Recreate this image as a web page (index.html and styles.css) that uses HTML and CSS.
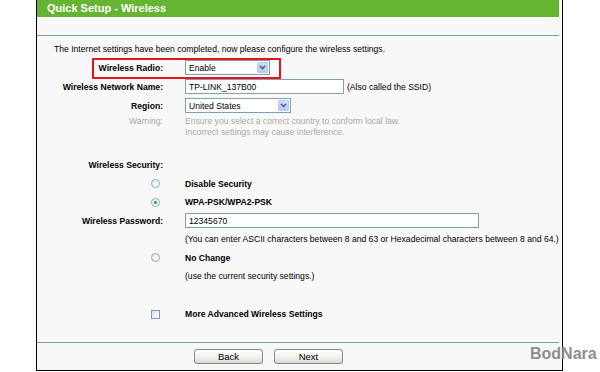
FILE: index.html
```html
<!DOCTYPE html>
<html lang="en">
<head>
    <meta charset="UTF-8">
    <title>Quick Setup - Wireless</title>
    <link rel="stylesheet" href="styles.css">
</head>
<body>
<div class="page">
    <div class="frame">
        <div class="title">Quick Setup - Wireless</div>
        <div class="title-gap"></div>
        <p class="intro">The Internet settings have been completed, now please configure the wireless settings.</p>

        <form class="form">
            <div class="row marked">
                <label class="lbl">Wireless Radio:</label>
                <div class="field">
                    <div class="select w-radio">
                        <select><option>Enable</option><option>Disable</option></select>
                        <span class="arrow"><svg width="7" height="5" viewBox="0 0 7 5"><path d="M0.8 0.8 L3.5 3.6 L6.2 0.8" fill="none" stroke="#4a5f8a" stroke-width="1.5"/></svg></span>
                    </div>
                </div>
                <span class="highlight"></span>
            </div>
            <div class="row">
                <label class="lbl">Wireless Network Name:</label>
                <div class="field">
                    <input type="text" class="text w-ssid" value="TP-LINK_137B00">
                    <span class="note">(Also called the SSID)</span>
                </div>
            </div>
            <div class="row">
                <label class="lbl">Region:</label>
                <div class="field">
                    <div class="select w-region">
                        <select><option>United States</option></select>
                        <span class="arrow"><svg width="7" height="5" viewBox="0 0 7 5"><path d="M0.8 0.8 L3.5 3.6 L6.2 0.8" fill="none" stroke="#4a5f8a" stroke-width="1.5"/></svg></span>
                    </div>
                </div>
            </div>
            <div class="row warn">
                <span class="lbl">Warning:</span>
                <div class="field">Ensure you select a correct country to conform local law.<br>Incorrect settings may cause interference.</div>
            </div>

            <div class="security">
                <div class="row">
                    <span class="lbl">Wireless Security:</span>
                    <div class="field"></div>
                </div>
                <div class="row">
                    <span class="pick"><input type="radio" name="sec" class="radio"></span>
                    <div class="field strong">Disable Security</div>
                </div>
                <div class="row">
                    <span class="pick"><input type="radio" name="sec" class="radio" checked></span>
                    <div class="field strong">WPA-PSK/WPA2-PSK</div>
                </div>
                <div class="row">
                    <label class="lbl">Wireless Password:</label>
                    <div class="field"><input type="text" class="text w-pass" value="12345670"></div>
                </div>
                <div class="row">
                    <span></span>
                    <div class="field hint">(You can enter ASCII characters between 8 and 63 or Hexadecimal characters between 8 and 64.)</div>
                </div>
                <div class="row">
                    <span class="pick"><input type="radio" name="sec" class="radio"></span>
                    <div class="field strong">No Change</div>
                </div>
                <div class="row">
                    <span></span>
                    <div class="field">(use the current security settings.)</div>
                </div>
            </div>

            <div class="row more">
                <span class="pick"><input type="checkbox" class="check"></span>
                <div class="field strong">More Advanced Wireless Settings</div>
            </div>
        </form>

        <div class="footer">
            <button type="button" class="btn">Back</button>
            <button type="button" class="btn">Next</button>
        </div>
    </div>
    <div class="watermark">BodNara</div>
</div>
</body>
</html>
```

FILE: styles.css
```css
body {
    margin: 0;
    background-color: #fff;
    font-family: "Liberation Sans", Arial, sans-serif;
    font-size: 8.6px;
    color: #000;
}
.page {
    position: relative;
    width: 600px;
    height: 372px;
    overflow: hidden;
}
.frame {
    margin-left: 36px;
    width: 522px;
    height: 370px;
    padding-right: 3px;
    border-left: 1px solid #000;
    border-right: 1px solid #000;
    border-bottom: 1px solid #000;
    background-color: #f8f8f8;
}
.title {
    height: 17px;
    line-height: 17px;
    padding-left: 10px;
    background-color: #66b532;
    color: #fff;
    font-size: 11px;
    font-weight: bold;
}
.title-gap {
    height: 18px;
    border-bottom: 1px solid #6fa98a;
}
.intro {
    margin: 8px 0 0 17px;
    line-height: 11px;
}
.form {
    margin: 3px 0 0 0;
}
.row {
    display: grid;
    grid-template-columns: 126px 1fr;
    column-gap: 22px;
    align-items: center;
    height: 19px;
}
.marked {
    position: relative;
}
.highlight {
    position: absolute;
    left: 55px;
    top: 0;
    width: 185px;
    height: 17px;
    border: 2px solid #e8141b;
}
.lbl {
    text-align: right;
    font-weight: bold;
}
.field {
    display: flex;
    align-items: center;
    gap: 3px;
}
.strong {
    font-weight: bold;
}
.note {
    white-space: nowrap;
}
.warn {
    height: auto;
    align-items: start;
    padding-top: 1px;
    line-height: 11px;
    color: #a8a8a8;
}
.warn .lbl {
    font-weight: normal;
}
.warn .field {
    display: block;
}
.security {
    margin-top: 18px;
}
.security .row {
    height: 18.5px;
}
.hint {
    white-space: nowrap;
}
.more {
    margin-top: 19px;
}
.pick {
    justify-self: end;
    display: flex;
    margin-right: 3px;
}
.text {
    box-sizing: border-box;
    height: 15px;
    margin: 0;
    padding: 0 3px;
    border: 1px solid #7f9db9;
    background-color: #fff;
    font-family: inherit;
    font-size: 8.6px;
    color: #000;
}
.w-ssid {
    width: 159px;
}
.w-pass {
    width: 294px;
}
.select {
    box-sizing: border-box;
    display: flex;
    height: 15px;
    border: 1px solid #7f9db9;
    background-color: #fff;
}
.w-radio {
    width: 85px;
}
.w-region {
    width: 106px;
}
.select select {
    flex: 1;
    min-width: 0;
    margin: 0;
    padding: 0 3px;
    border: none;
    background: transparent;
    font-family: inherit;
    font-size: 8.6px;
    color: #000;
    -webkit-appearance: none;
    appearance: none;
}
.arrow {
    box-sizing: border-box;
    display: flex;
    align-items: center;
    justify-content: center;
    width: 11px;
    margin: 1px;
    border: 1px solid #b8c9f0;
    border-radius: 1px;
    background: linear-gradient(#d4e0fd, #b6c9f5);
}
.radio {
    box-sizing: border-box;
    width: 9px;
    height: 9px;
    margin: 0;
    border: 1px solid #8ea3bb;
    border-radius: 50%;
    background: linear-gradient(135deg, #e6e8e3, #fff);
    -webkit-appearance: none;
    appearance: none;
}
.radio:checked {
    background: radial-gradient(circle, #33a02c 0, #4cb540 1.3px, #fff 2.2px);
}
.check {
    box-sizing: border-box;
    width: 9px;
    height: 9px;
    margin: 0;
    border: 1px solid #8098b5;
    background: linear-gradient(135deg, #dcdfe3, #fff);
    -webkit-appearance: none;
    appearance: none;
}
.footer {
    display: flex;
    gap: 11px;
    margin-top: 18px;
    padding: 6px 0 0 157px;
    border-top: 1px solid #6fa98a;
}
.btn {
    box-sizing: border-box;
    width: 69px;
    height: 15px;
    padding: 0;
    border: 1px solid #7e8b99;
    border-radius: 3px;
    background: linear-gradient(#fff, #f0efea 60%, #dedbd0);
    font-family: inherit;
    font-size: 9.5px;
    color: #000;
}
.watermark {
    position: absolute;
    left: 530px;
    top: 345px;
    font-family: "Liberation Sans", Arial, sans-serif;
    font-size: 16px;
    font-weight: bold;
    color: #8e8e8e;
}
```
